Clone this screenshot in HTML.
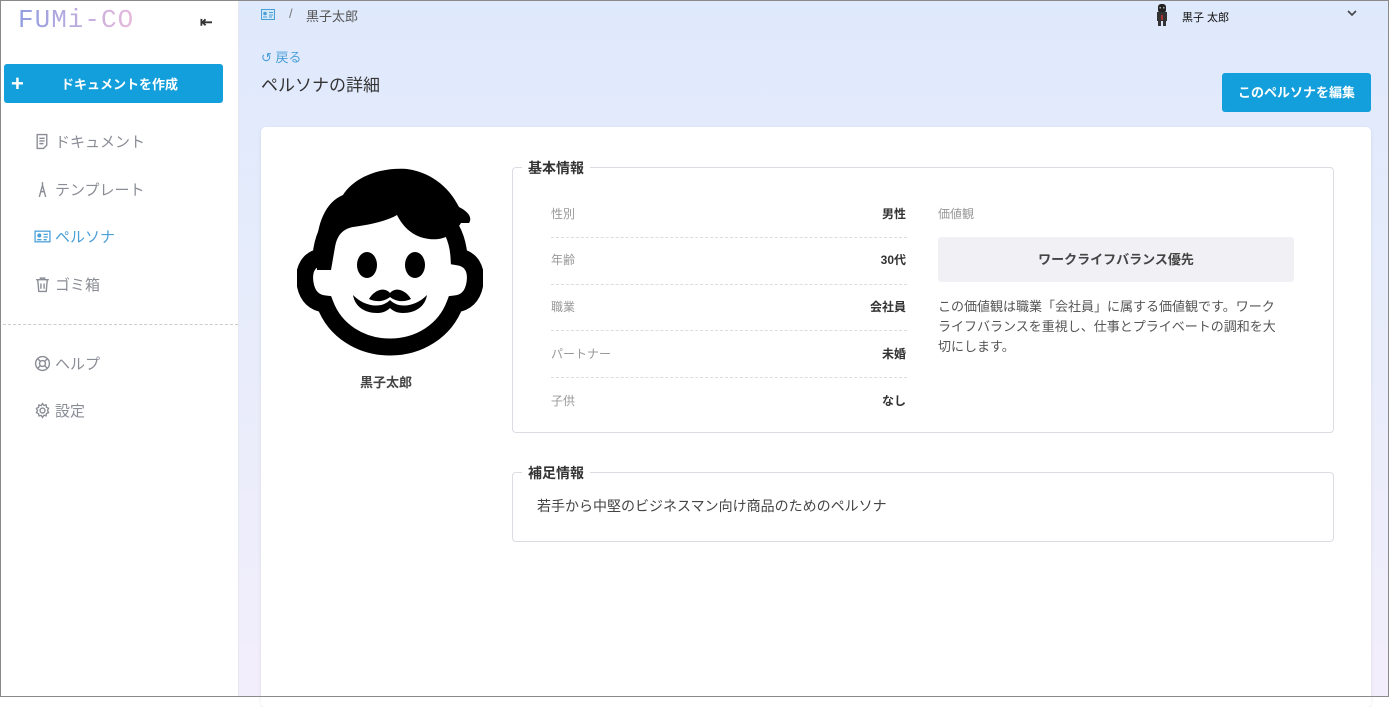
<!DOCTYPE html>
<html><head><meta charset="utf-8"><style>
*{box-sizing:border-box;margin:0;padding:0}
body{width:1389px;height:697px;overflow:hidden;font-family:"Liberation Sans","Noto Sans CJK JP",sans-serif;position:relative;background:#fff}
.frame{position:absolute;inset:0;border:1px solid #8a8a8a;z-index:10;pointer-events:none}
.side{position:absolute;left:0;top:0;width:239px;height:697px;background:#fff;border-right:1px solid #e6e8f0}
.main{position:absolute;left:239px;top:0;right:0;bottom:0;background:linear-gradient(180deg,#dfe9fc 0%,#e6ecfb 40%,#f3eefb 100%)}
.abs{position:absolute;white-space:nowrap}
.nav{position:absolute;left:34px;font-size:15px;color:#8a8d95;display:flex;align-items:center;gap:4px}
.nav svg{width:17px;height:17px}
.card{position:absolute;left:261px;top:127px;width:1110px;height:580px;background:#fff;border-radius:5px;box-shadow:0 1px 4px rgba(0,0,0,.08)}
fieldset.box{position:absolute;border:1px solid #dcdde3;border-radius:4px}
.lg{position:absolute;background:#fff;padding:0 6px;font-size:14px;font-weight:bold;color:#333}
.lbl{position:absolute;left:551px;font-size:12px;color:#999}
.val{position:absolute;font-size:12px;font-weight:bold;color:#333}
.dash{position:absolute;left:551px;width:356px;border-top:1px dashed #ddd}
</style></head><body>
<div class="frame"></div>
<div class="side">
  <div class="abs" style="left:18px;top:5px;font-size:26px;letter-spacing:1px;font-family:'Liberation Mono',monospace;background:linear-gradient(90deg,#8f9ee0,#e8b9dc);-webkit-background-clip:text;color:transparent">FUMi-CO</div>
  <div class="abs" style="left:200px;top:13px;font-size:15px;color:#333;font-weight:bold">⇤</div>
  <div class="abs" style="left:4px;top:64px;width:219px;height:39px;background:#139fdb;border-radius:3px;color:#fff">
    <span class="abs" style="left:7px;top:7px;font-size:22px;font-weight:bold">+</span>
    <span class="abs" style="left:57px;top:10px;font-size:13px;font-weight:bold">ドキュメントを作成</span>
  </div>
  <div class="nav" style="top:131px"><svg viewBox="0 0 16 16" fill="none" stroke="#8a8d95" stroke-width="1.3"><path d="M3 1.5h9v10l-3 3H3z M5 5h5M5 7.5h5M5 10h4"/></svg>ドキュメント</div>
  <div class="nav" style="top:179px"><svg viewBox="0 0 16 16" fill="none" stroke="#8a8d95" stroke-width="1.3"><path d="M8 1v3M5 15L8 4l3 11M6 10h4"/></svg>テンプレート</div>
  <div class="nav" style="top:226px;color:#4a9fd9"><svg viewBox="0 0 16 16" fill="none" stroke="#4a9fd9" stroke-width="1.2"><rect x="1" y="3" width="14" height="10"/><circle cx="5" cy="7" r="1.3" fill="#4a9fd9"/><path d="M3 11h4M9 6h4M9 8.5h4M9 11h3"/></svg>ペルソナ</div>
  <div class="nav" style="top:274px"><svg viewBox="0 0 16 16" fill="none" stroke="#8a8d95" stroke-width="1.3"><path d="M2 3.5h12M6 3.5V2h4v1.5M3.5 3.5l1 11h7l1-11M6.5 7v5M9.5 7v5"/></svg>ゴミ箱</div>
  <div class="abs" style="left:3px;top:324px;width:235px;border-top:1px dashed #ccc"></div>
  <div class="nav" style="top:353px"><svg viewBox="0 0 16 16" fill="none" stroke="#8a8d95" stroke-width="1.3"><circle cx="8" cy="8" r="6.5"/><circle cx="8" cy="8" r="2.8"/><path d="M3.5 3.5l2.5 2.5M12.5 3.5L10 6M3.5 12.5L6 10M12.5 12.5L10 10"/></svg>ヘルプ</div>
  <div class="nav" style="top:400px"><svg viewBox="0 0 16 16" fill="none" stroke="#8a8d95" stroke-width="1.3"><circle cx="8" cy="8" r="2.3"/><path d="M8 1.5l1.3 1.8 2.1-.6.3 2.2 2 1-1 2 1 2-2 1-.3 2.1-2.1-.5L8 14.5l-1.3-1.9-2.1.5-.3-2.1-2-1 1-2-1-2 2-1 .3-2.2 2.1.6z"/></svg>設定</div>
</div>
<div class="main"></div>
<svg class="abs" style="left:261px;top:9px" width="14" height="11" viewBox="0 0 14 11" fill="none" stroke="#4a9fd9"><rect x=".5" y=".5" width="13" height="10" fill="#d4e8f8"/><circle cx="4" cy="4.5" r="1.3" fill="#4a9fd9"/><path d="M2 8h4M8 3.5h4M8 6h4M8 8h3"/></svg>
<div class="abs" style="left:289px;top:6px;font-size:13px;color:#777">/</div>
<div class="abs" style="left:306px;top:6px;font-size:13px;color:#555">黒子太郎</div>
<svg class="abs" style="left:1154px;top:3px" width="16" height="24" viewBox="0 0 16 24"><rect x="4" y="1" width="8" height="9" rx="3" fill="#222"/><rect x="3" y="9" width="10" height="9" fill="#333"/><rect x="4" y="17" width="3" height="6" fill="#333"/><rect x="9" y="17" width="3" height="6" fill="#333"/><rect x="5.5" y="4" width="1.5" height="1.5" fill="#aaa"/><rect x="9" y="4" width="1.5" height="1.5" fill="#aaa"/><rect x="7" y="12" width="2" height="5" fill="#a33"/></svg>
<div class="abs" style="left:1182px;top:9px;font-size:11px;color:#111">黒子 太郎</div>
<svg class="abs" style="left:1347px;top:10px" width="10" height="7" viewBox="0 0 10 7"><path d="M1 1l4 4 4-4" fill="none" stroke="#444" stroke-width="1.6"/></svg>
<div class="abs" style="left:261px;top:47px;font-size:13px;color:#4a9fd9">↺ 戻る</div>
<div class="abs" style="left:261px;top:71px;font-size:17px;color:#333">ペルソナの詳細</div>
<div class="abs" style="left:1222px;top:73px;width:149px;height:39px;background:#139fdb;border-radius:3px;color:#fff;font-size:13px;font-weight:bold;text-align:center;line-height:39px">このペルソナを編集</div>
<div class="card"></div>
<svg class="abs" style="left:297px;top:165px" width="186" height="194" viewBox="0 0 186 194">
  <path d="M93 32 C136 32 160 58 162 92 C174 94 180 104 178 118 C176 132 168 138 158 139 C148 166 122 182 93 182 C64 182 38 166 28 139 C18 138 10 132 8 118 C6 104 12 94 24 92 C26 58 50 32 93 32Z" fill="none" stroke="#000" stroke-width="17"/>
  <path d="M20 105 C16 66 26 38 46 30 C56 14 80 2 110 4 C138 8 154 26 162 42 C170 46 176 52 172 58 L164 58 C158 68 148 76 132 74 C116 72 106 62 100 50 C90 56 72 60 56 62 C46 64 40 70 38 82 L34 105Z" fill="#000"/>
  <ellipse cx="70" cy="100" rx="10" ry="13" fill="#000"/>
  <ellipse cx="118" cy="100" rx="10" ry="13" fill="#000"/>
  <path d="M56 130 C64 138 74 142 84 140 C88 139 91 137 93 135 C95 137 98 139 102 140 C112 142 122 138 130 130 C128 142 118 148 106 148 C100 148 96 146 93 143 C90 146 86 148 80 148 C68 148 58 142 56 130Z M72 134 C78 124 88 122 93 128 C98 122 108 124 114 134 C106 138 98 136 93 132 C88 136 80 138 72 134Z" fill="#000"/>
</svg>
<div class="abs" style="left:360px;top:372px;font-size:13px;font-weight:bold;color:#444">黒子太郎</div>
<fieldset class="box" style="left:512px;top:167px;width:822px;height:266px"></fieldset>
<div class="lg" style="left:522px;top:158px">基本情報</div>
<div class="lbl" style="top:205px">性別</div><div class="val" style="top:205px;right:483px">男性</div>
<div class="dash" style="top:237px"></div>
<div class="lbl" style="top:251px">年齢</div><div class="val" style="top:251px;right:483px">30代</div>
<div class="dash" style="top:284px"></div>
<div class="lbl" style="top:298px">職業</div><div class="val" style="top:298px;right:483px">会社員</div>
<div class="dash" style="top:330px"></div>
<div class="lbl" style="top:345px">パートナー</div><div class="val" style="top:345px;right:483px">未婚</div>
<div class="dash" style="top:377px"></div>
<div class="lbl" style="top:392px">子供</div><div class="val" style="top:392px;right:483px">なし</div>
<div class="abs" style="left:938px;top:205px;font-size:12px;color:#999">価値観</div>
<div class="abs" style="left:938px;top:237px;width:356px;height:45px;background:#f0f0f5;border-radius:3px;text-align:center;line-height:45px;font-size:13px;font-weight:bold;color:#444">ワークライフバランス優先</div>
<div class="abs" style="left:938px;top:297px;width:348px;white-space:normal;font-size:13px;line-height:20px;color:#555">この価値観は職業「会社員」に属する価値観です。ワークライフバランスを重視し、仕事とプライベートの調和を大切にします。</div>
<fieldset class="box" style="left:512px;top:472px;width:822px;height:70px"></fieldset>
<div class="lg" style="left:522px;top:463px">補足情報</div>
<div class="abs" style="left:537px;top:496px;font-size:14px;color:#444">若手から中堅のビジネスマン向け商品のためのペルソナ</div>
</body></html>
